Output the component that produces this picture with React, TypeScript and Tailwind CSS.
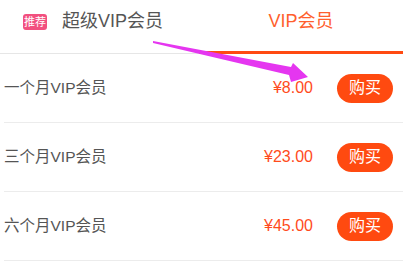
const rows = [
  { name: "一个月VIP会员", price: "¥8.00" },
  { name: "三个月VIP会员", price: "¥23.00" },
  { name: "六个月VIP会员", price: "¥45.00" },
];

const font = { fontFamily: '"Liberation Sans", "Noto Sans CJK SC", sans-serif' };

export default function App() {
  return (
    <main className="relative h-[269px] w-[403px] overflow-hidden bg-white" style={font}>
      {/* tabs */}
      <div className="flex h-[54px]">
        <div className="flex w-[199px] items-start gap-[15px] border-b border-[#e6e6e6] pl-[23px] pt-[9px]">
          <span className="mt-[5px] rounded-[3px] bg-[#f2507f] px-[1px] text-[11px] leading-[16px] text-white">
            推荐
          </span>
          <span className="text-[18px] leading-[24px] text-[#555]">超级VIP会员</span>
        </div>
        <div className="flex flex-1 justify-center border-b-[3px] border-[#ff4a12] pt-[9px]">
          <span className="text-[18px] leading-[24px] text-[#ff5f2e]">VIP会员</span>
        </div>
      </div>

      {/* plans */}
      <div className="ml-[4px]">
        {rows.map((r) => (
          <div
            key={r.name}
            className="flex h-[69px] items-center border-b border-[#ececec] pr-[10px]"
          >
            <span className="flex-1 text-[15.5px] text-[#555]">{r.name}</span>
            <span className="text-[16px] font-medium text-[#ff4b1c]">{r.price}</span>
            <button className="ml-[24px] h-[29px] w-[56px] rounded-full bg-[#ff4a10] text-[16px] text-white">
              购买
            </button>
          </div>
        ))}
      </div>

      {/* annotation arrow */}
      <svg className="pointer-events-none absolute left-0 top-0" width="403" height="269">
        <polygon
          points="153,41 291,67 293,63 308,77 291,82 289,75 153,43"
          fill="#e536f0"
        />
      </svg>
    </main>
  );
}
